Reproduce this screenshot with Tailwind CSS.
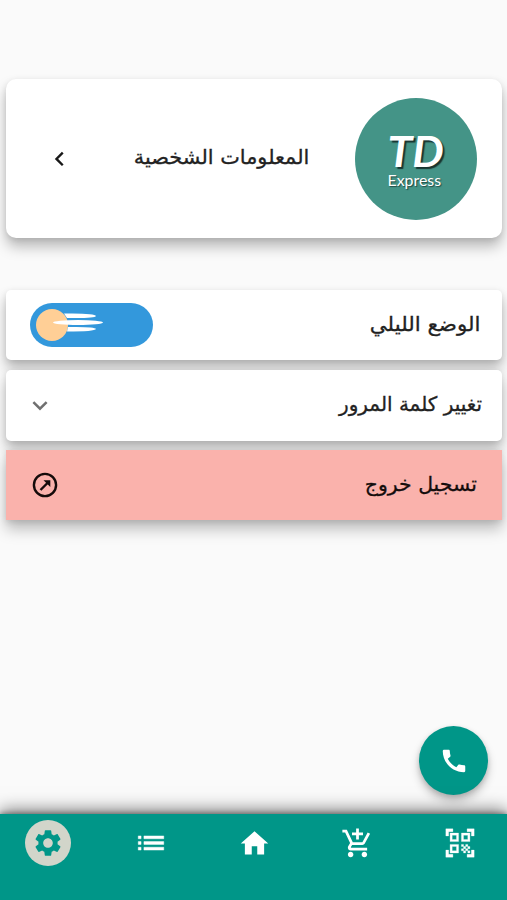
<!DOCTYPE html>
<html lang="ar">
<head>
<meta charset="utf-8">
<meta name="viewport" content="width=device-width, initial-scale=1">
<title>TD Express</title>
<script src="https://cdn.jsdelivr.net/npm/@tailwindcss/browser@4"></script>
</head>
<body class="bg-[#fafafa] font-['DejaVu_Sans',sans-serif]">
<div class="flex h-[900px] w-[507px] flex-col overflow-hidden bg-[#fafafa] text-[#222]">
  <main class="flex flex-1 flex-col pr-[5px] pl-[6px] pt-[79px]">
    <section class="flex h-[159px] shrink-0 items-center rounded-[10px] bg-white pr-[25px] pl-[40px] shadow-[0_9px_14px_rgba(0,0,0,0.25),0_2px_6px_rgba(0,0,0,0.1)]">
      <svg class="size-[27px]" viewBox="0 0 24 24" fill="none" stroke="#181818" stroke-width="2.1"><path d="M14.9 6.8 9.3 12.4l5.600 5.600"/></svg>
      <p dir="rtl" class="mr-[46px] ml-auto origin-right scale-x-[1.043] pb-[4px] text-[20px] leading-[30px] whitespace-nowrap [-webkit-text-stroke:0.3px_#222]">المعلومات الشخصية</p>
      <div class="flex size-[122px] shrink-0 flex-col items-center rounded-full bg-[#449487] pt-[34px] text-white">
        <span class="-ml-[1px] scale-x-[1.060] font-['Lato'] text-[42px] leading-[39px] font-bold italic text-shadow-[2px_2px_1px_rgba(0,0,0,.65)]">TD</span>
        <span class="-ml-[4px] scale-x-[1.060] font-['Lato'] text-[15px] leading-[18px] text-shadow-[1px_1px_1px_rgba(0,0,0,.5)]">Express</span>
      </div>
    </section>
    <div class="mt-[52px] flex flex-col">
      <div class="flex h-[70px] items-center justify-between rounded-[5px] bg-white pr-[21px] pl-[24px] shadow-[0_9px_14px_rgba(0,0,0,0.25),0_2px_6px_rgba(0,0,0,0.1)]">
        <svg class="h-[44px] w-[123px]" viewBox="0 0 123 44">
          <rect width="123" height="44" rx="22" fill="#3398dc"/>
          <circle cx="22" cy="22" r="16" fill="#ffcf96"/>
          <path d="M34 10.500Q65 10 66 13Q65 15.500 37 15Z" fill="#fff"/>
          <path d="M38 24Q65 23.500 66 26Q65 28.500 37 28.500Z" fill="#fff"/>
          <ellipse cx="48" cy="19.500" rx="25" ry="2.500" fill="#fff"/>
        </svg>
        <p dir="rtl" class="origin-right scale-x-[1.070] pb-[3px] text-[20px] leading-[30px] whitespace-nowrap [-webkit-text-stroke:0.3px_#222]">الوضع الليلي</p>
      </div>
      <div class="mt-[10px] flex h-[71px] items-center justify-between rounded-[5px] bg-white pr-[20px] pl-[19px] shadow-[0_9px_14px_rgba(0,0,0,0.25),0_2px_6px_rgba(0,0,0,0.1)]">
        <svg class="size-[30px]" viewBox="0 0 24 24" fill="none" stroke="#707070" stroke-width="2"><path d="m6.700 8.900 5.300 5.300 5.300-5.300"/></svg>
        <p dir="rtl" class="origin-right pb-[3px] text-[20px] leading-[30px] whitespace-nowrap [-webkit-text-stroke:0.3px_#222]">تغيير كلمة المرور</p>
      </div>
      <div class="mt-[9px] flex h-[70px] items-center justify-between bg-[#fab2ac] pr-[25px] pl-[26px] text-[#140d0c] shadow-[0_9px_14px_rgba(0,0,0,0.25),0_2px_6px_rgba(0,0,0,0.1)]">
        <svg class="size-[26px]" viewBox="0 0 26 26" fill="none" stroke="#140b0a" stroke-width="2.400"><circle cx="13" cy="13" r="11.100"/><path d="m8.500 18 7.500-7.500"/><path d="M11.500 8.200h6.800V15Z" fill="#140b0a" stroke="none"/></svg>
        <p dir="rtl" class="origin-right scale-x-[1.020] pb-[3px] text-[20px] leading-[30px] whitespace-nowrap [-webkit-text-stroke:0.3px_#140d0c]">تسجيل خروج</p>
      </div>
    </div>
    <button aria-label="اتصال" class="mt-auto mr-[14px] mb-[19px] flex size-[69px] items-center justify-center self-end rounded-full bg-[#009688] shadow-[0_6px_10px_rgba(0,0,0,0.22),0_2px_5px_rgba(0,0,0,0.14)]">
      <svg class="size-[30px]" viewBox="0 0 24 24" fill="#fff"><path d="M20.010 15.380c-1.230 0-2.420-.2-3.530-.56-.35-.12-.74-.03-1.010.24l-1.570 1.970c-2.830-1.350-5.480-3.900-6.890-6.830l1.950-1.660c.27-.28.35-.67.24-1.020-.37-1.110-.56-2.300-.56-3.530 0-.54-.45-.99-.99-.99H4.190C3.650 3 3 3.240 3 3.990 3 13.280 10.730 21 20.010 21c.71 0 .99-.63.99-1.180v-3.450c0-.54-.45-.99-.99-.99z"/></svg>
    </button>
  </main>
  <nav class="flex h-[86px] shrink-0 items-start justify-between bg-[#009688] pt-[6px] pr-[24px] pl-[25px] text-white shadow-[0_-4px_16px_rgba(0,0,0,0.5),0_-1px_5px_rgba(0,0,0,0.35)]">
    <span class="flex size-[46px] items-center justify-center rounded-full bg-[#d2d5ca] text-[#009688]"><svg class="size-[32px]" viewBox="0 0 24 24" fill="currentColor"><path d="M19.140 12.940c.04-.3.060-.61.060-.94 0-.32-.02-.64-.07-.94l2.030-1.580c.18-.14.23-.41.120-.61l-1.920-3.320c-.12-.22-.37-.29-.59-.22l-2.390.96c-.5-.38-1.030-.7-1.620-.94l-.36-2.540c-.04-.24-.24-.41-.48-.41h-3.840c-.24 0-.43.17-.47.41l-.36 2.540c-.59.24-1.130.57-1.620.94l-2.390-.96c-.22-.08-.47 0-.59.22L2.740 8.870c-.12.21-.08.47.12.61l2.030 1.580c-.05.3-.09.63-.09.94s.02.64.07.94l-2.030 1.580c-.18.14-.23.41-.12.61l1.920 3.320c.12.22.37.29.59.22l2.390-.96c.5.38 1.030.7 1.620.94l.36 2.540c.05.24.24.41.48.41h3.840c.24 0 .44-.17.47-.41l.36-2.540c.59-.24 1.130-.56 1.620-.94l2.390.96c.22.08.47 0 .59-.22l1.920-3.320c.12-.22.07-.47-.12-.61l-2.010-1.580zM12 15.600c-1.980 0-3.600-1.620-3.600-3.600s1.620-3.600 3.600-3.600 3.600 1.620 3.600 3.600-1.620 3.600-3.600 3.600z"/></svg></span>
    <span class="flex size-[46px] items-center justify-center"><svg class="size-[34px]" viewBox="0 0 24 24" fill="currentColor" stroke="currentColor" stroke-width=".3"><path d="M3 13h2v-2H3v2zm0 4h2v-2H3v2zm0-8h2V7H3v2zm4 4h14v-2H7v2zm0 4h14v-2H7v2zM7 7v2h14V7H7z"/></svg></span>
    <span class="flex size-[46px] items-center justify-center"><svg class="size-[33px]" viewBox="0 0 24 24" fill="currentColor"><path d="M10 20v-6h4v6h5v-8h3L12 3 2 12h3v8z"/></svg></span>
    <span class="flex size-[46px] items-center justify-center"><svg class="size-[33px]" viewBox="0 0 24 24" fill="currentColor"><path d="M11 9h2V6h3V4h-3V1h-2v3H8v2h3v3zm-4 9c-1.100 0-1.990.9-1.990 2S5.900 22 7 22s2-.9 2-2-.9-2-2-2zm10 0c-1.100 0-1.990.9-1.990 2s.89 2 1.990 2 2-.9 2-2-.9-2-2-2zm-9.830-3.250.03-.12.9-1.630h7.450c.75 0 1.410-.41 1.750-1.030l3.860-7.010L19.420 4h-.01l-1.100 2-2.760 5H8.530l-.13-.27L6.160 6l-.95-2-.94-2H1v2h2l3.600 7.590-1.350 2.450c-.16.28-.25.61-.25.96 0 1.100.9 2 2 2h12v-2H7.420c-.13 0-.25-.11-.25-.25z"/></svg></span>
    <span class="flex size-[46px] items-center justify-center"><svg class="size-[34px]" viewBox="0 0 24 24" fill="currentColor" stroke="currentColor" stroke-width=".2"><path d="M9.500 6.500v3h-3v-3h3M11 5H5v6h6V5zm-1.500 9.500v3h-3v-3h3M11 13H5v6h6v-6zm6.500-6.500v3h-3v-3h3M19 5h-6v6h6V5zm-6 8h1.500v1.500H13V13zm1.500 1.500H16V16h-1.500v-1.500zM16 13h1.500v1.500H16V13zm-3 3h1.500v1.500H13V16zm1.500 1.500H16V19h-1.500v-1.500zM16 16h1.500v1.500H16V16zm1.500-1.500H19V16h-1.500v-1.500zm0 3H19V19h-1.500v-1.500zM22 7h-2V4h-3V2h5v5zm0 15v-5h-2v3h-3v2h5zM2 22h5v-2H4v-3H2v5zM2 2v5h2V4h3V2H2z"/></svg></span>
  </nav>
</div>
</body>
</html>
